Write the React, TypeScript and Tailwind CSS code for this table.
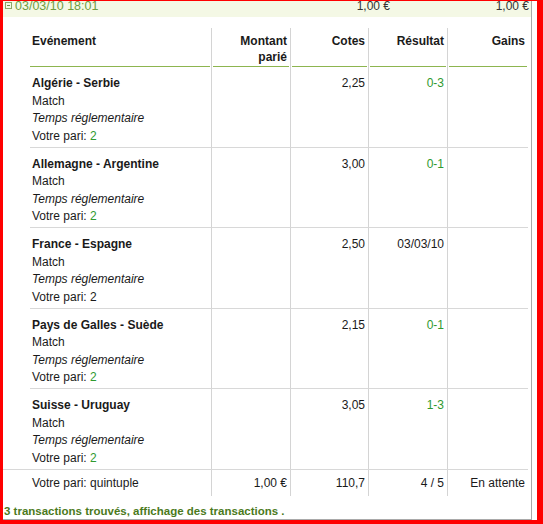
const font = { fontFamily: '"Liberation Sans", Arial, sans-serif' }

type Leg = {
  match: string
  cote: string
  result: string
  resultGreen: boolean
  pick: string
  pickGreen: boolean
}

const legs: Leg[] = [
  { match: 'Algérie - Serbie', cote: '2,25', result: '0-3', resultGreen: true, pick: '2', pickGreen: true },
  { match: 'Allemagne - Argentine', cote: '3,00', result: '0-1', resultGreen: true, pick: '2', pickGreen: true },
  { match: 'France - Espagne', cote: '2,50', result: '03/03/10', resultGreen: false, pick: '2', pickGreen: false },
  { match: 'Pays de Galles - Suède', cote: '2,15', result: '0-1', resultGreen: true, pick: '2', pickGreen: true },
  { match: 'Suisse - Uruguay', cote: '3,05', result: '1-3', resultGreen: true, pick: '2', pickGreen: true },
]

const cols = 'grid grid-cols-[182px_79px_78px_79px_80px]'

function HeaderCell({ children, first, last }: { children: React.ReactNode; first?: boolean; last?: boolean }) {
  return (
    <div className={`flex flex-col pt-[5px] font-bold leading-[16px] ${last ? '' : 'border-r border-r-[#d4d4d4]'}`}>
      <div className={`flex-1 pb-[1px] ${first ? 'pl-[2px]' : 'pr-[3px] text-right'}`}>{children}</div>
      <div className={`h-px bg-[#8db54f] ${first ? 'mr-px' : 'mx-px'}`} />
    </div>
  )
}

function Row({ leg, last }: { leg: Leg; last: boolean }) {
  const rowBorder = last ? '' : 'border-b border-b-[#d8d8d8]'
  const num = `pt-[8px] pr-[3px] text-right leading-[17.5px] ${rowBorder}`
  return (
    <div className={cols}>
      <div className={`pt-[8px] pb-[1.5px] pl-[2px] leading-[17.5px] border-r border-r-[#d4d4d4] ${rowBorder}`}>
        <div className="font-bold">{leg.match}</div>
        <div>Match</div>
        <div className="italic">Temps réglementaire</div>
        <div>
          Votre pari: <span className={leg.pickGreen ? 'text-[#2f9a2f]' : ''}>{leg.pick}</span>
        </div>
      </div>
      <div className={`border-r border-r-[#d4d4d4] ${rowBorder}`} />
      <div className={`${num} border-r border-r-[#d4d4d4]`}>{leg.cote}</div>
      <div className={`${num} border-r border-r-[#d4d4d4] ${leg.resultGreen ? 'text-[#2f9a2f]' : ''}`}>
        {leg.result}
      </div>
      <div className={rowBorder} />
    </div>
  )
}

export default function App() {
  return (
    <div className="w-[543px] h-[524px] bg-[#ff0000] pt-[1px] pl-[3px] pr-[6px] pb-[4px] text-[12px] text-[#1a1a1a]" style={font}>
      <div className="h-full bg-white pr-[5px]">
        <div className="h-full border-r border-b border-[#a9a9a9] flex flex-col">
          {/* collapsed bet line */}
          <div className="h-[16px] bg-[#f4f8e5] flex items-start text-[#6f9c3f] leading-[10px] whitespace-nowrap">
            <div className="w-[350px] flex items-start">
              <span className="ml-[2px] mt-px w-[7px] h-[7px] border border-[#8aa86a] flex items-center justify-center">
                <span className="w-[3px] h-px bg-[#6f8f4f]" />
              </span>
              <span className="ml-[3px] text-[12.5px]">03/03/10 18:01</span>
            </div>
            <div className="w-[37px] text-right text-[#333]">1,00 €</div>
            <div className="flex-1 text-right pr-[2px] text-[#333]">1,00 €</div>
          </div>

          <div className="pl-[27px] pr-[3px] pt-[11px]">
            <div className={cols}>
              <HeaderCell first>Evénement</HeaderCell>
              <HeaderCell>
                Montant
                <br />
                parié
              </HeaderCell>
              <HeaderCell>Cotes</HeaderCell>
              <HeaderCell>Résultat</HeaderCell>
              <HeaderCell last>Gains</HeaderCell>
            </div>
            {legs.map((l, i) => (
              <Row key={l.match} leg={l} last={i === legs.length - 1} />
            ))}
          </div>

          {/* summary */}
          <div className="mr-[3px] border-t border-t-[#d8d8d8] pl-[27px]">
            <div className={`${cols} leading-[17.5px]`}>
              <div className="pt-[5px] pb-[3.5px] pl-[2px] border-r border-r-[#d4d4d4]">Votre pari: quintuple</div>
              <div className="pt-[5px] pr-[3px] text-right border-r border-r-[#d4d4d4]">1,00 €</div>
              <div className="pt-[5px] pr-[3px] text-right border-r border-r-[#d4d4d4]">110,7</div>
              <div className="pt-[5px] pr-[3px] text-right border-r border-r-[#d4d4d4]">4 / 5</div>
              <div className="pt-[5px] pr-[3px] text-right">En attente</div>
            </div>
          </div>

          <div className="mt-[8px] pl-px text-[11.5px] font-bold text-[#4b7a1c] leading-[14px]">
            3 transactions trouvés, affichage des transactions .
          </div>
        </div>
      </div>
    </div>
  )
}
